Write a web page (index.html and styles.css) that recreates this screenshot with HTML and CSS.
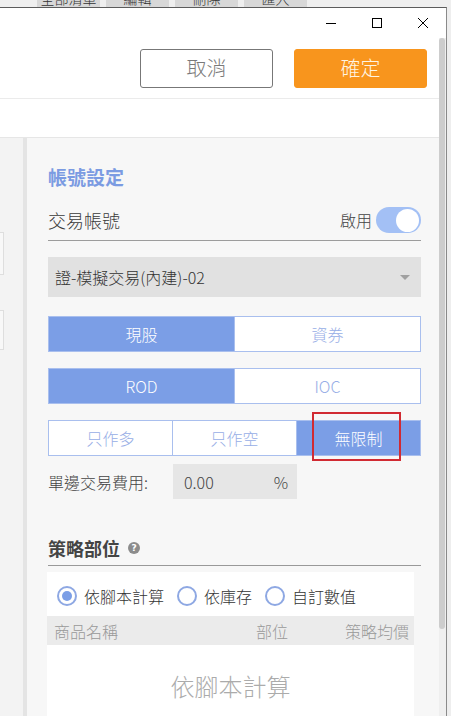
FILE: index.html
```html
<!DOCTYPE html>
<html lang="zh-Hant">
<head>
<meta charset="utf-8">
<title>帳號設定</title>
<link rel="stylesheet" href="styles.css">
</head>
<body>
<div class="desk">
  <div class="desk-tab"><span>全部清單</span></div>
  <div class="desk-tab"><span>編輯</span></div>
  <div class="desk-tab"><span>刪除</span></div>
  <div class="desk-tab"><span>匯入</span></div>
</div>
<div class="window">
  <div class="titlebar">
    <div class="wbtn"><svg width="12" height="12" viewBox="0 0 12 12"><path d="M1 6.5H11" stroke="#000" stroke-width="1"/></svg></div>
    <div class="wbtn"><svg width="12" height="12" viewBox="0 0 12 12"><rect x="1.5" y="1.5" width="9" height="9" fill="none" stroke="#000" stroke-width="1"/></svg></div>
    <div class="wbtn"><svg width="12" height="12" viewBox="0 0 12 12"><path d="M1 1L11 11M11 1L1 11" stroke="#000" stroke-width="1"/></svg></div>
  </div>
  <div class="frame">
    <div class="content">
      <div class="actions">
        <button class="btn btn-cancel">取消</button>
        <button class="btn btn-ok">確定</button>
      </div>
      <div class="toolbar"></div>
      <div class="body">
        <div class="side">
          <div class="side-item item-a"></div>
          <div class="side-item item-b"></div>
        </div>
        <div class="divider"></div>
        <div class="panel">
          <div class="sec-title">帳號設定</div>
          <div class="acct-row">
            <span class="acct-label">交易帳號</span>
            <span class="enable">啟用<span class="toggle"><span class="knob"></span></span></span>
          </div>
          <div class="select">
            <span>證-模擬交易(內建)-02</span>
            <span class="caret"></span>
          </div>
          <div class="seg seg-first">
            <div class="seg-item on">現股</div>
            <div class="seg-item">資券</div>
          </div>
          <div class="seg">
            <div class="seg-item on">ROD</div>
            <div class="seg-item">IOC</div>
          </div>
          <div class="seg">
            <div class="seg-item">只作多</div>
            <div class="seg-item">只作空</div>
            <div class="seg-item on marked">無限制<span class="mark"></span></div>
          </div>
          <div class="fee-row">
            <span class="fee-label">單邊交易費用:</span>
            <div class="fee-input"><span>0.00</span><span>%</span></div>
          </div>
          <div class="sec-title2">策略部位<span class="help">?</span></div>
          <div class="pos-box">
            <div class="radio-row">
              <label class="radio"><span class="dot checked"></span>依腳本計算</label>
              <label class="radio"><span class="dot"></span>依庫存</label>
              <label class="radio"><span class="dot"></span>自訂數值</label>
            </div>
            <div class="thead">
              <span>商品名稱</span>
              <span>部位</span>
              <span>策略均價</span>
            </div>
            <div class="empty">依腳本計算</div>
          </div>
        </div>
      </div>
    </div>
    <div class="scrollbar"><div class="thumb"></div></div>
  </div>
</div>
</body>
</html>
```
FILE: styles.css
```css
* { box-sizing: border-box; }
html, body { margin: 0; padding: 0; }
body {
  width: 451px;
  height: 716px;
  overflow: hidden;
  background: #eeeeee;
  font-family: "Noto Sans CJK TC", "Noto Sans", sans-serif;
  font-weight: 300;
  color: #333;
}
.desk {
  height: 7px;
  display: flex;
  gap: 6px;
  padding-left: 37px;
  background: #efefef;
  overflow: hidden;
}
.desk-tab {
  width: 63px;
  height: 7px;
  background: #d8d8d8;
  overflow: hidden;
  text-align: center;
  font-size: 14px;
  color: #333;
}
.desk-tab span { display: block; line-height: 14px; margin-top: -9px; }
.window {
  width: 447px;
  height: 709px;
  background: #fff;
  border-top: 1px solid #5c5c5c;
  border-right: 1px solid #8a8a8a;
  display: flex;
  flex-direction: column;
}
.titlebar {
  height: 30px;
  flex-shrink: 0;
  display: flex;
  justify-content: flex-end;
}
.wbtn {
  width: 46px;
  height: 30px;
  display: flex;
  align-items: center;
  justify-content: center;
}
.frame {
  flex: 1;
  display: flex;
  min-height: 0;
}
.content {
  width: 439px;
  display: flex;
  flex-direction: column;
  min-height: 0;
}
.scrollbar {
  width: 7px;
  background: #efefef;
}
.thumb {
  width: 6px;
  height: 591px;
  background: #cdcdcd;
  border-radius: 3px;
}
.actions {
  height: 61px;
  flex-shrink: 0;
  border-bottom: 1px solid #ebebeb;
  display: flex;
  justify-content: flex-end;
  align-items: center;
  gap: 21px;
  padding-right: 12px;
}
.btn {
  width: 133px;
  height: 39px;
  border-radius: 3px;
  font-family: inherit;
  font-weight: 300;
  font-size: 20px;
  line-height: 1;
  padding: 0;
}
.btn-cancel { background: #fff; border: 1px solid #777; color: #7a7a7a; }
.btn-ok { background: #f8951d; border: 1px solid #f8951d; color: #fff4e2; }
.toolbar {
  height: 39px;
  flex-shrink: 0;
  border-bottom: 1px solid #e6e6e6;
}
.body {
  flex: 1;
  min-height: 0;
  overflow: hidden;
  display: flex;
  background: #f3f3f3;
}
.side {
  width: 23px;
  flex-shrink: 0;
  background: #f3f3f3;
  display: flex;
  flex-direction: column;
}
.side-item {
  width: 4px;
  background: #f8f8f8;
  border: 1px solid #dedede;
  border-left: none;
}
.item-a { margin-top: 94px; height: 43px; }
.item-b { margin-top: 35px; height: 40px; }
.divider { width: 4px; flex-shrink: 0; background: #e4e4e4; }
.panel {
  flex: 1;
  background: #f7f7f7;
  padding: 27px 18px 0 21px;
}
.sec-title {
  font-size: 19px;
  font-weight: bold;
  line-height: 24px;
  height: 24px;
  color: #7b9be2;
}
.acct-row {
  margin-top: 17px;
  height: 35px;
  padding-bottom: 6px;
  border-bottom: 1px solid #9c9c9c;
  display: flex;
  align-items: center;
  justify-content: space-between;
}
.acct-label { font-size: 18px; color: #3a3a3a; }
.enable {
  display: flex;
  align-items: center;
  gap: 4px;
  font-size: 16px;
  color: #444;
}
.toggle {
  width: 45px;
  height: 26px;
  border-radius: 13px;
  background: #a3c0f5;
  display: flex;
  align-items: center;
  justify-content: flex-end;
  padding-right: 2px;
}
.knob {
  width: 23px;
  height: 23px;
  border-radius: 50%;
  background: #fff;
}
.select {
  margin-top: 16px;
  height: 40px;
  background: #e1e1e1;
  display: flex;
  align-items: center;
  justify-content: space-between;
  padding: 0 11px 0 7px;
  font-size: 16px;
  color: #333;
}
.caret {
  width: 0;
  height: 0;
  border-left: 5px solid transparent;
  border-right: 5px solid transparent;
  border-top: 5px solid #a0a0a0;
}
.seg {
  margin-top: 16px;
  height: 36px;
  display: flex;
  border: 1px solid #a9bfee;
  background: #fff;
}
.seg-first { margin-top: 19px; }
.seg-item {
  flex: 1;
  display: flex;
  align-items: center;
  justify-content: center;
  font-size: 16px;
  color: #97aee6;
  border-left: 1px solid #a9bfee;
}
.seg-item:first-child { border-left: none; }
.seg-item.on { background: #7b9ee6; color: #fff; }
.marked { position: relative; }
.mark {
  position: absolute;
  left: 15px;
  top: -9px;
  width: 89px;
  height: 49px;
  border: 2px solid #d12a32;
}
.fee-row {
  margin-top: 8px;
  display: flex;
  align-items: center;
  gap: 25px;
}
.fee-label { font-size: 16px; color: #444; }
.fee-input {
  width: 124px;
  height: 35px;
  background: #e6e6e6;
  display: flex;
  align-items: center;
  justify-content: space-between;
  padding: 0 9px 0 11px;
  font-size: 16px;
  color: #444;
}
.sec-title2 {
  margin-top: 37px;
  font-size: 18px;
  font-weight: bold;
  line-height: 24px;
  padding-bottom: 5px;
  border-bottom: 1px solid #999;
  color: #444;
  display: flex;
  align-items: center;
}
.help {
  margin-left: 8px;
  width: 12px;
  height: 12px;
  border-radius: 50%;
  background: #8c8c8c;
  color: #fff;
  font-size: 9px;
  font-weight: bold;
  line-height: 12px;
  text-align: center;
  font-family: "DejaVu Sans", sans-serif;
}
.pos-box {
  margin-top: 6px;
  margin-left: -1px;
  width: 367px;
  height: 200px;
  background: #fff;
}
.radio-row {
  height: 44px;
  padding: 4px 0 0 10px;
  display: flex;
  align-items: center;
  gap: 13px;
}
.radio {
  display: flex;
  align-items: center;
  gap: 7px;
  font-size: 16px;
  color: #333;
}
.dot {
  width: 20px;
  height: 20px;
  border-radius: 50%;
  border: 2px solid #8ea8e3;
  background: #fff;
  display: flex;
  align-items: center;
  justify-content: center;
}
.dot.checked::after {
  content: "";
  width: 10px;
  height: 10px;
  border-radius: 50%;
  background: #7b9ee6;
}
.thead {
  height: 29px;
  background: #ebebeb;
  display: grid;
  grid-template-columns: 1fr auto auto;
  column-gap: 57px;
  align-items: center;
  padding: 0 5px 0 7px;
  font-size: 16px;
  color: #999;
}
.empty {
  padding-top: 26px;
  line-height: 30px;
  text-align: center;
  font-size: 24px;
  color: #ababab;
}
```
